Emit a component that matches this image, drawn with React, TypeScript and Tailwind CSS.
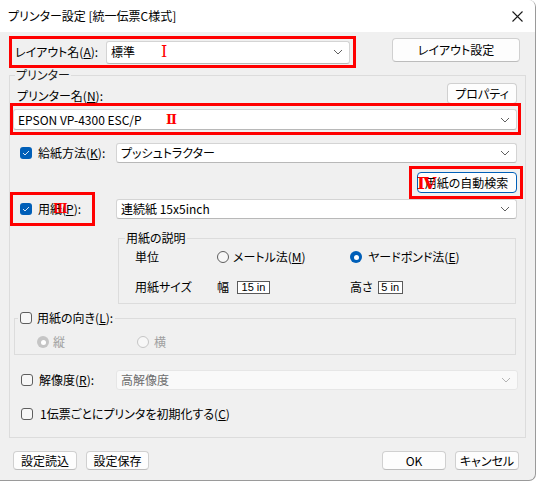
import React from "react";

const font = "font-['Noto_Sans_CJK_JP','Noto_Sans',sans-serif] [font-feature-settings:'palt']";

function Chevron({ disabled }: { disabled?: boolean }) {
  return (
    <svg width="10" height="6" viewBox="0 0 10 6" className="shrink-0">
      <polyline
        points="1,1 5,5 9,1"
        fill="none"
        stroke={disabled ? "#b4b4b4" : "#606060"}
        strokeWidth="1"
      />
    </svg>
  );
}

function Combo({
  value,
  className = "",
  disabled,
}: {
  value: string;
  className?: string;
  disabled?: boolean;
}) {
  return (
    <div
      className={`flex items-center justify-between rounded-[3px] border pl-[4px] pr-[6px] ${
        disabled
          ? "border-[#e6e6e6] bg-[#f9f9f9] text-[#6d6d6d]"
          : "border-[#d4d4d4] border-b-[#b8b8b8] bg-white text-black"
      } ${className}`}
    >
      <span className="text-[12px] leading-none">{value}</span>
      <Chevron disabled={disabled} />
    </div>
  );
}

function Btn({ children, className = "" }: { children: React.ReactNode; className?: string }) {
  return (
    <div
      className={`flex items-center justify-center rounded-[4px] border border-[#d0d0d0] border-b-[#bcbcbc] bg-[#fdfdfd] text-[12px] leading-none text-black ${className}`}
    >
      {children}
    </div>
  );
}

function Check({ checked }: { checked?: boolean }) {
  return checked ? (
    <div className="flex h-[12px] w-[12px] shrink-0 items-center justify-center rounded-[3px] bg-[#005fb8]">
      <svg width="8" height="6" viewBox="0 0 8 6">
        <polyline points="1,3 3,5 7,1" fill="none" stroke="#dbe8f5" strokeWidth="1" />
      </svg>
    </div>
  ) : (
    <div className="h-[12px] w-[12px] shrink-0 rounded-[3px] border border-[#5e5e5e] bg-[#f7f7f7]" />
  );
}

function Radio({ on, disabled }: { on?: boolean; disabled?: boolean }) {
  if (on) {
    return (
      <div
        className={`flex h-[12px] w-[12px] shrink-0 items-center justify-center rounded-full ${
          disabled ? "bg-[#c5c5c5]" : "bg-[#005fb8]"
        }`}
      >
        <div className="h-[5px] w-[5px] rounded-full bg-white" />
      </div>
    );
  }
  return (
    <div
      className={`h-[12px] w-[12px] shrink-0 rounded-full border bg-[#f7f7f7] ${
        disabled ? "border-[#c5c5c5]" : "border-[#5e5e5e]"
      }`}
    />
  );
}

function ValueBox({ children, className = "" }: { children: React.ReactNode; className?: string }) {
  return (
    <div
      className={`flex h-[13px] items-center justify-center border border-[#5a5a5a] bg-white font-['Liberation_Sans',sans-serif] text-[11px] leading-none ${className}`}
    >
      {children}
    </div>
  );
}

const mark = "absolute font-['DejaVu_Serif','Liberation_Serif',serif] leading-none text-[#ff0000]";

export default function App() {
  return (
    <div className={`h-[483px] w-[537px] overflow-hidden bg-white ${font} text-black`}>
      <div className="flex h-[481px] w-[536px] flex-col overflow-hidden rounded-r-[7px] border-r border-b border-[#9a9a9a] bg-[#f0f0f0]">
        {/* Title bar */}
        <div className="flex h-[32px] shrink-0 items-center justify-between bg-white pl-[8px] pr-[12px]">
          <span className="text-[12px] leading-none">プリンター設定 [統一伝票C様式]</span>
          <svg width="11" height="11" viewBox="0 0 11 11">
            <path d="M0.5 0.5 L10.5 10.5 M10.5 0.5 L0.5 10.5" stroke="#1a1a1a" strokeWidth="1.1" />
          </svg>
        </div>

        {/* Body */}
        <div className="relative flex flex-1 flex-col px-[9px] pt-[4px]">
          {/* Layout row */}
          <div className="flex h-[31px] items-start">
            <div className="relative flex h-[32px] w-[347px] items-center border-[3px] border-[#ff0000] pl-[3px]">
              <span className="w-[91px] text-[12px] leading-none">
                レイアウト名(<u>A</u>):
              </span>
              <Combo value="標準" className="h-[23px] w-[244px] pl-[2px]" />
              <span className={`${mark} left-[149px] top-[5px] text-[16px]`}>Ⅰ</span>
            </div>
            <Btn className="ml-[36px] mt-[2px] h-[24px] w-[128px]">レイアウト設定</Btn>
          </div>

          {/* Printer group */}
          <fieldset className="w-[517px] border border-[#dcdcdc]">
            <legend className="ml-[5px] px-[1px] text-[12px] leading-[16px] text-[#1a1a1a]">プリンター</legend>

            <div className="flex h-[20px] items-end justify-between pr-[8px]">
              <span className="pb-[1px] pl-[7px] text-[12px] leading-none">
                プリンター名(<u>N</u>):
              </span>
              <Btn className="mb-[-1px] h-[21px] w-[70px]">プロパティ</Btn>
            </div>

            <div className="relative flex h-[32px] w-[511px] items-center border-[3px] border-[#ff0000] pr-[1px] pt-[1px]">
              <Combo value="EPSON VP-4300 ESC/P" className="h-[21px] w-full pl-[4px]" />
              <span className={`${mark} left-[153px] top-[7px] text-[13px] font-bold`}>Ⅱ</span>
            </div>

            <div className="mt-[8px] flex h-[19px] items-center pl-[10px]">
              <Check checked />
              <span className="ml-[6px] w-[78px] text-[12px] leading-none">
                給紙方法(<u>K</u>):
              </span>
              <Combo value="プッシュトラクター" className="h-[20px] w-[401px]" />
            </div>

            <div className="mt-[4px] flex justify-end pr-[2px]">
              <div className="relative flex h-[33px] w-[114px] items-center justify-center border-[3px] border-[#ff0000] pl-[1px]">
                <div className="flex h-[21px] w-[100px] items-center justify-center rounded-[4px] border border-[#005fb8] bg-[#fdfdfd] text-[12px] leading-none shadow-[inset_0_0_0_1px_#ffffff]">
                  用紙の自動検索
                </div>
                <span className={`${mark} left-[5px] top-[6px] text-[17px] font-bold`}>Ⅳ</span>
              </div>
            </div>

            <div className="flex h-[19px] items-center">
              <div className="relative flex h-[34px] w-[85px] shrink-0 items-center border-[3px] border-[#ff0000] pl-[7px]">
                <Check checked />
                <span className="ml-[6px] text-[12px] leading-none">
                  用紙(<u>P</u>):
                </span>
                <span className={`${mark} left-[40px] top-[8px] text-[12px] font-bold`}>Ⅲ</span>
              </div>
              <Combo value="連続紙 15x5inch" className="ml-[21px] h-[20px] w-[401px]" />
            </div>

            {/* Paper description */}
            <fieldset className="ml-[108px] mt-[12px] w-[398px] border border-[#dcdcdc] pb-[5px]">
              <legend className="ml-[6px] px-[1px] text-[12px] leading-[16px]">用紙の説明</legend>
              <div className="flex h-[22px] items-center pl-[16px] text-[12px] leading-none">
                <span className="w-[82px]">単位</span>
                <div className="flex w-[133px] items-center">
                  <Radio />
                  <span className="ml-[4px]">
                    メートル法(<u>M</u>)
                  </span>
                </div>
                <div className="flex items-center">
                  <Radio on />
                  <span className="ml-[6px]">
                    ヤードポンド法(<u>E</u>)
                  </span>
                </div>
              </div>
              <div className="mt-[8px] flex h-[22px] items-center pl-[16px] text-[12px] leading-none">
                <span className="w-[82px]">用紙サイズ</span>
                <div className="flex w-[133px] items-center">
                  <span>幅</span>
                  <ValueBox className="ml-[8px] w-[33px]">15 in</ValueBox>
                </div>
                <div className="flex items-center">
                  <span>高さ</span>
                  <ValueBox className="ml-[5px] w-[25px]">5 in</ValueBox>
                </div>
              </div>
            </fieldset>

            {/* Orientation */}
            <fieldset className="ml-[4px] mt-[6px] w-[502px] border border-[#dcdcdc] pb-[4px]">
              <legend className="ml-[3px] flex h-[16px] items-center px-[2px]">
                <Check />
                <span className="ml-[5px] text-[12px] leading-none">
                  用紙の向き(<u>L</u>):
                </span>
              </legend>
              <div className="mt-[8px] flex h-[16px] items-center pl-[22px] text-[12px] leading-none text-[#a0a0a0]">
                <div className="flex w-[100px] items-center">
                  <Radio on disabled />
                  <span className="ml-[4px]">縦</span>
                </div>
                <div className="flex items-center">
                  <Radio disabled />
                  <span className="ml-[5px]">横</span>
                </div>
              </div>
            </fieldset>

            <div className="mt-[15px] flex h-[19px] items-center pl-[11px]">
              <Check />
              <span className="ml-[6px] w-[77px] text-[12px] leading-none">
                解像度(<u>R</u>):
              </span>
              <Combo value="高解像度" className="h-[20px] w-[402px]" disabled />
            </div>

            <div className="mt-[17px] flex h-[16px] items-center pl-[11px]">
              <Check />
              <span className="ml-[7px] text-[12px] leading-none">
                1伝票ごとにプリンタを初期化する(<u>C</u>)
              </span>
            </div>
            <div className="h-[15px]" />
          </fieldset>

          {/* Bottom buttons */}
          <div className="mt-[13px] flex items-center justify-between pl-[4px] pr-[7px]">
            <div className="flex gap-[9px]">
              <Btn className="h-[19px] w-[64px]">設定読込</Btn>
              <Btn className="h-[19px] w-[63px]">設定保存</Btn>
            </div>
            <div className="flex gap-[9px]">
              <Btn className="h-[19px] w-[64px]">OK</Btn>
              <Btn className="h-[19px] w-[64px]">キャンセル</Btn>
            </div>
          </div>
        </div>
      </div>
    </div>
  );
}
